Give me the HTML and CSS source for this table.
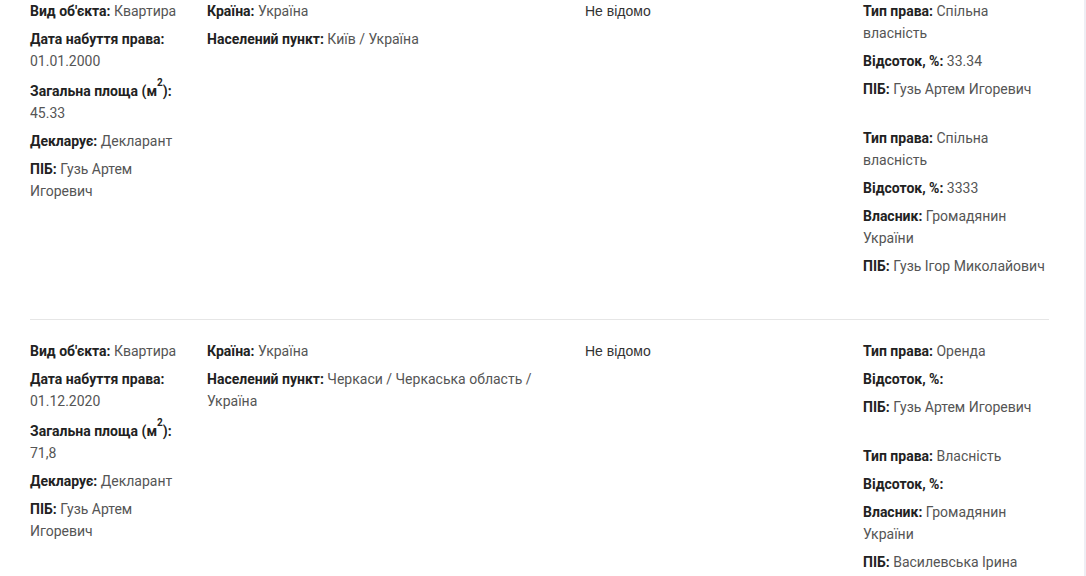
FILE: index.html
```html
<!DOCTYPE html>
<html lang="uk">
<head>
<meta charset="utf-8">
<link rel="stylesheet" href="styles.css">
</head>
<body>
<div class="page">
  <div class="list">
    <div class="row">
      <div class="col col-obj">
        <p class="field"><b>Вид об'єкта:</b> Квартира</p>
        <p class="field"><b>Дата набуття права:</b> 01.01.2000</p>
        <p class="field"><b>Загальна площа (м<sup>2</sup>):</b> 45.33</p>
        <p class="field"><b>Декларує:</b> Декларант</p>
        <p class="field"><b>ПІБ:</b> Гузь Артем Игоревич</p>
      </div>
      <div class="col col-loc">
        <p class="field"><b>Країна:</b> Україна</p>
        <p class="field"><b>Населений пункт:</b> Київ / Україна</p>
      </div>
      <div class="col col-cost">
        <p class="plain">Не відомо</p>
      </div>
      <div class="col col-own">
        <div class="owner">
          <p class="field"><b>Тип права:</b> Спільна власність</p>
          <p class="field"><b>Відсоток, %:</b> 33.34</p>
          <p class="field"><b>ПІБ:</b> Гузь Артем Игоревич</p>
        </div>
        <div class="owner">
          <p class="field"><b>Тип права:</b> Спільна власність</p>
          <p class="field"><b>Відсоток, %:</b> 3333</p>
          <p class="field"><b>Власник:</b> Громадянин України</p>
          <p class="field"><b>ПІБ:</b> Гузь Ігор Миколайович</p>
        </div>
      </div>
    </div>
    <div class="row">
      <div class="col col-obj">
        <p class="field"><b>Вид об'єкта:</b> Квартира</p>
        <p class="field"><b>Дата набуття права:</b> 01.12.2020</p>
        <p class="field"><b>Загальна площа (м<sup>2</sup>):</b> 71,8</p>
        <p class="field"><b>Декларує:</b> Декларант</p>
        <p class="field"><b>ПІБ:</b> Гузь Артем Игоревич</p>
      </div>
      <div class="col col-loc">
        <p class="field"><b>Країна:</b> Україна</p>
        <p class="field"><b>Населений пункт:</b> Черкаси / Черкаська область / Україна</p>
      </div>
      <div class="col col-cost">
        <p class="plain">Не відомо</p>
      </div>
      <div class="col col-own">
        <div class="owner">
          <p class="field"><b>Тип права:</b> Оренда</p>
          <p class="field"><b>Відсоток, %:</b></p>
          <p class="field"><b>ПІБ:</b> Гузь Артем Игоревич</p>
        </div>
        <div class="owner">
          <p class="field"><b>Тип права:</b> Власність</p>
          <p class="field"><b>Відсоток, %:</b></p>
          <p class="field"><b>Власник:</b> Громадянин України</p>
          <p class="field"><b>ПІБ:</b> Василевська Ірина</p>
        </div>
      </div>
    </div>
  </div>
</div>
</body>
</html>
```

FILE: styles.css
```css
html, body {
  margin: 0;
  padding: 0;
  background: #ffffff;
}
body {
  font-family: Roboto, "Noto Sans", sans-serif;
  font-size: 14px;
  line-height: 22px;
  color: #555555;
  overflow: hidden;
}
.page {
  height: 576px;
  border-right: 2px solid #eeeef4;
  box-sizing: border-box;
  overflow: hidden;
}
.list {
  width: 1019px;
  margin-left: 30px;
}
.row {
  display: grid;
  grid-template-columns: 177px 378px 278px 186px;
  padding-bottom: 36px;
  margin-bottom: 20px;
  border-bottom: 1px solid #e6e6e6;
}
.col {
  padding-right: 14px;
}
.col-own {
  padding-right: 0;
}
.field, .plain {
  margin: 0 0 6px;
}
.field b {
  font-weight: 700;
  color: #222222;
}
.field sup {
  font-size: 10px;
  line-height: 1;
  vertical-align: 10px;
}
.plain {
  color: #333333;
  font-family: "Liberation Sans", Arial, sans-serif;
}
.owner {
  margin-bottom: 27px;
}
.owner:last-child {
  margin-bottom: 0;
}
```
